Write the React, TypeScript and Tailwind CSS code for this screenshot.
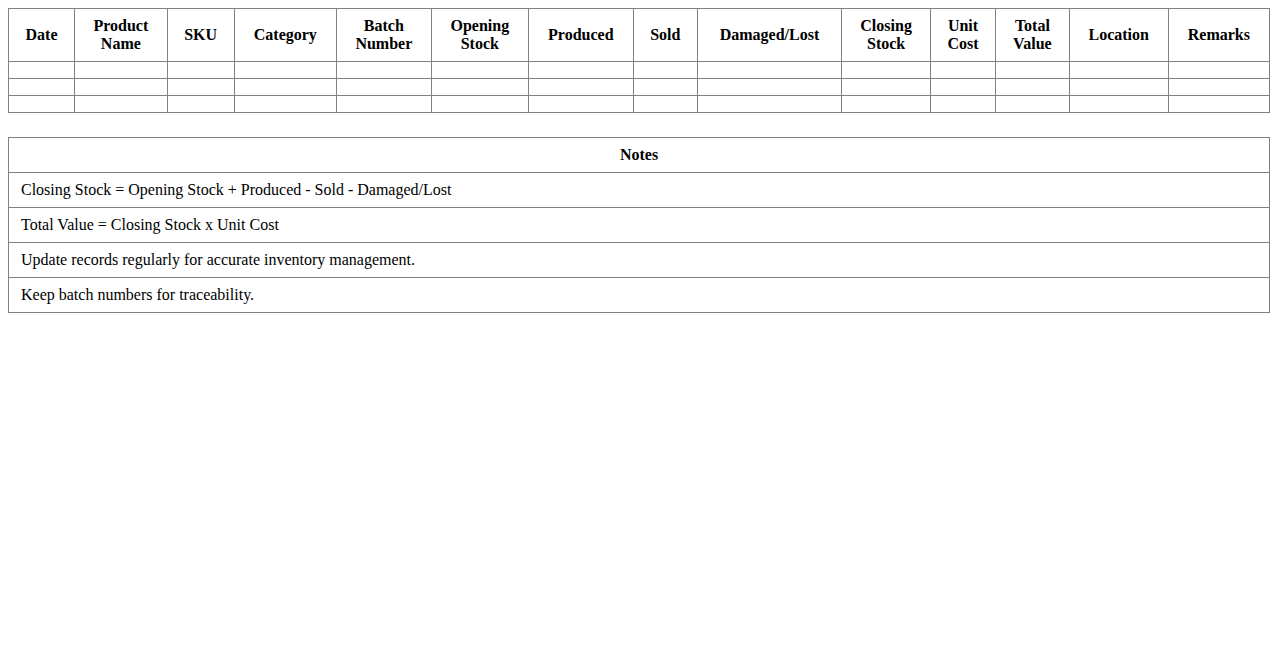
const headers = [
  ["Date"], ["Product", "Name"], ["SKU"], ["Category"], ["Batch", "Number"], ["Opening", "Stock"],
  ["Produced"], ["Sold"], ["Damaged/Lost"], ["Closing", "Stock"], ["Unit", "Cost"], ["Total", "Value"],
  ["Location"], ["Remarks"],
]

const notes = [
  "Closing Stock = Opening Stock + Produced - Sold - Damaged/Lost",
  "Total Value = Closing Stock x Unit Cost",
  "Update records regularly for accurate inventory management.",
  "Keep batch numbers for traceability.",
]

export default function App() {
  return (
    <div className="p-2 text-black bg-white" style={{ fontFamily: '"Liberation Serif", serif' }}>
      <table className="w-full border-collapse text-[16px] leading-[18px]">
        <thead>
          <tr>
            {headers.map((h, i) => (
              <th key={i} className="border border-[#808080] px-3 py-2 font-bold text-center">
                {h.map((l, j) => (
                  <div key={j}>{l}</div>
                ))}
              </th>
            ))}
          </tr>
        </thead>
        <tbody>
          {[0, 1, 2].map((r) => (
            <tr key={r}>
              {headers.map((_, i) => (
                <td key={i} className="border border-[#808080] px-3 py-2"></td>
              ))}
            </tr>
          ))}
        </tbody>
      </table>
      <table className="w-full border-collapse text-[16px] leading-[18px] mt-6">
        <thead>
          <tr>
            <th className="border border-[#808080] px-3 py-2 font-bold text-center">Notes</th>
          </tr>
        </thead>
        <tbody>
          {notes.map((n, i) => (
            <tr key={i}>
              <td className="border border-[#808080] px-3 py-2 text-left">{n}</td>
            </tr>
          ))}
        </tbody>
      </table>
    </div>
  )
}
